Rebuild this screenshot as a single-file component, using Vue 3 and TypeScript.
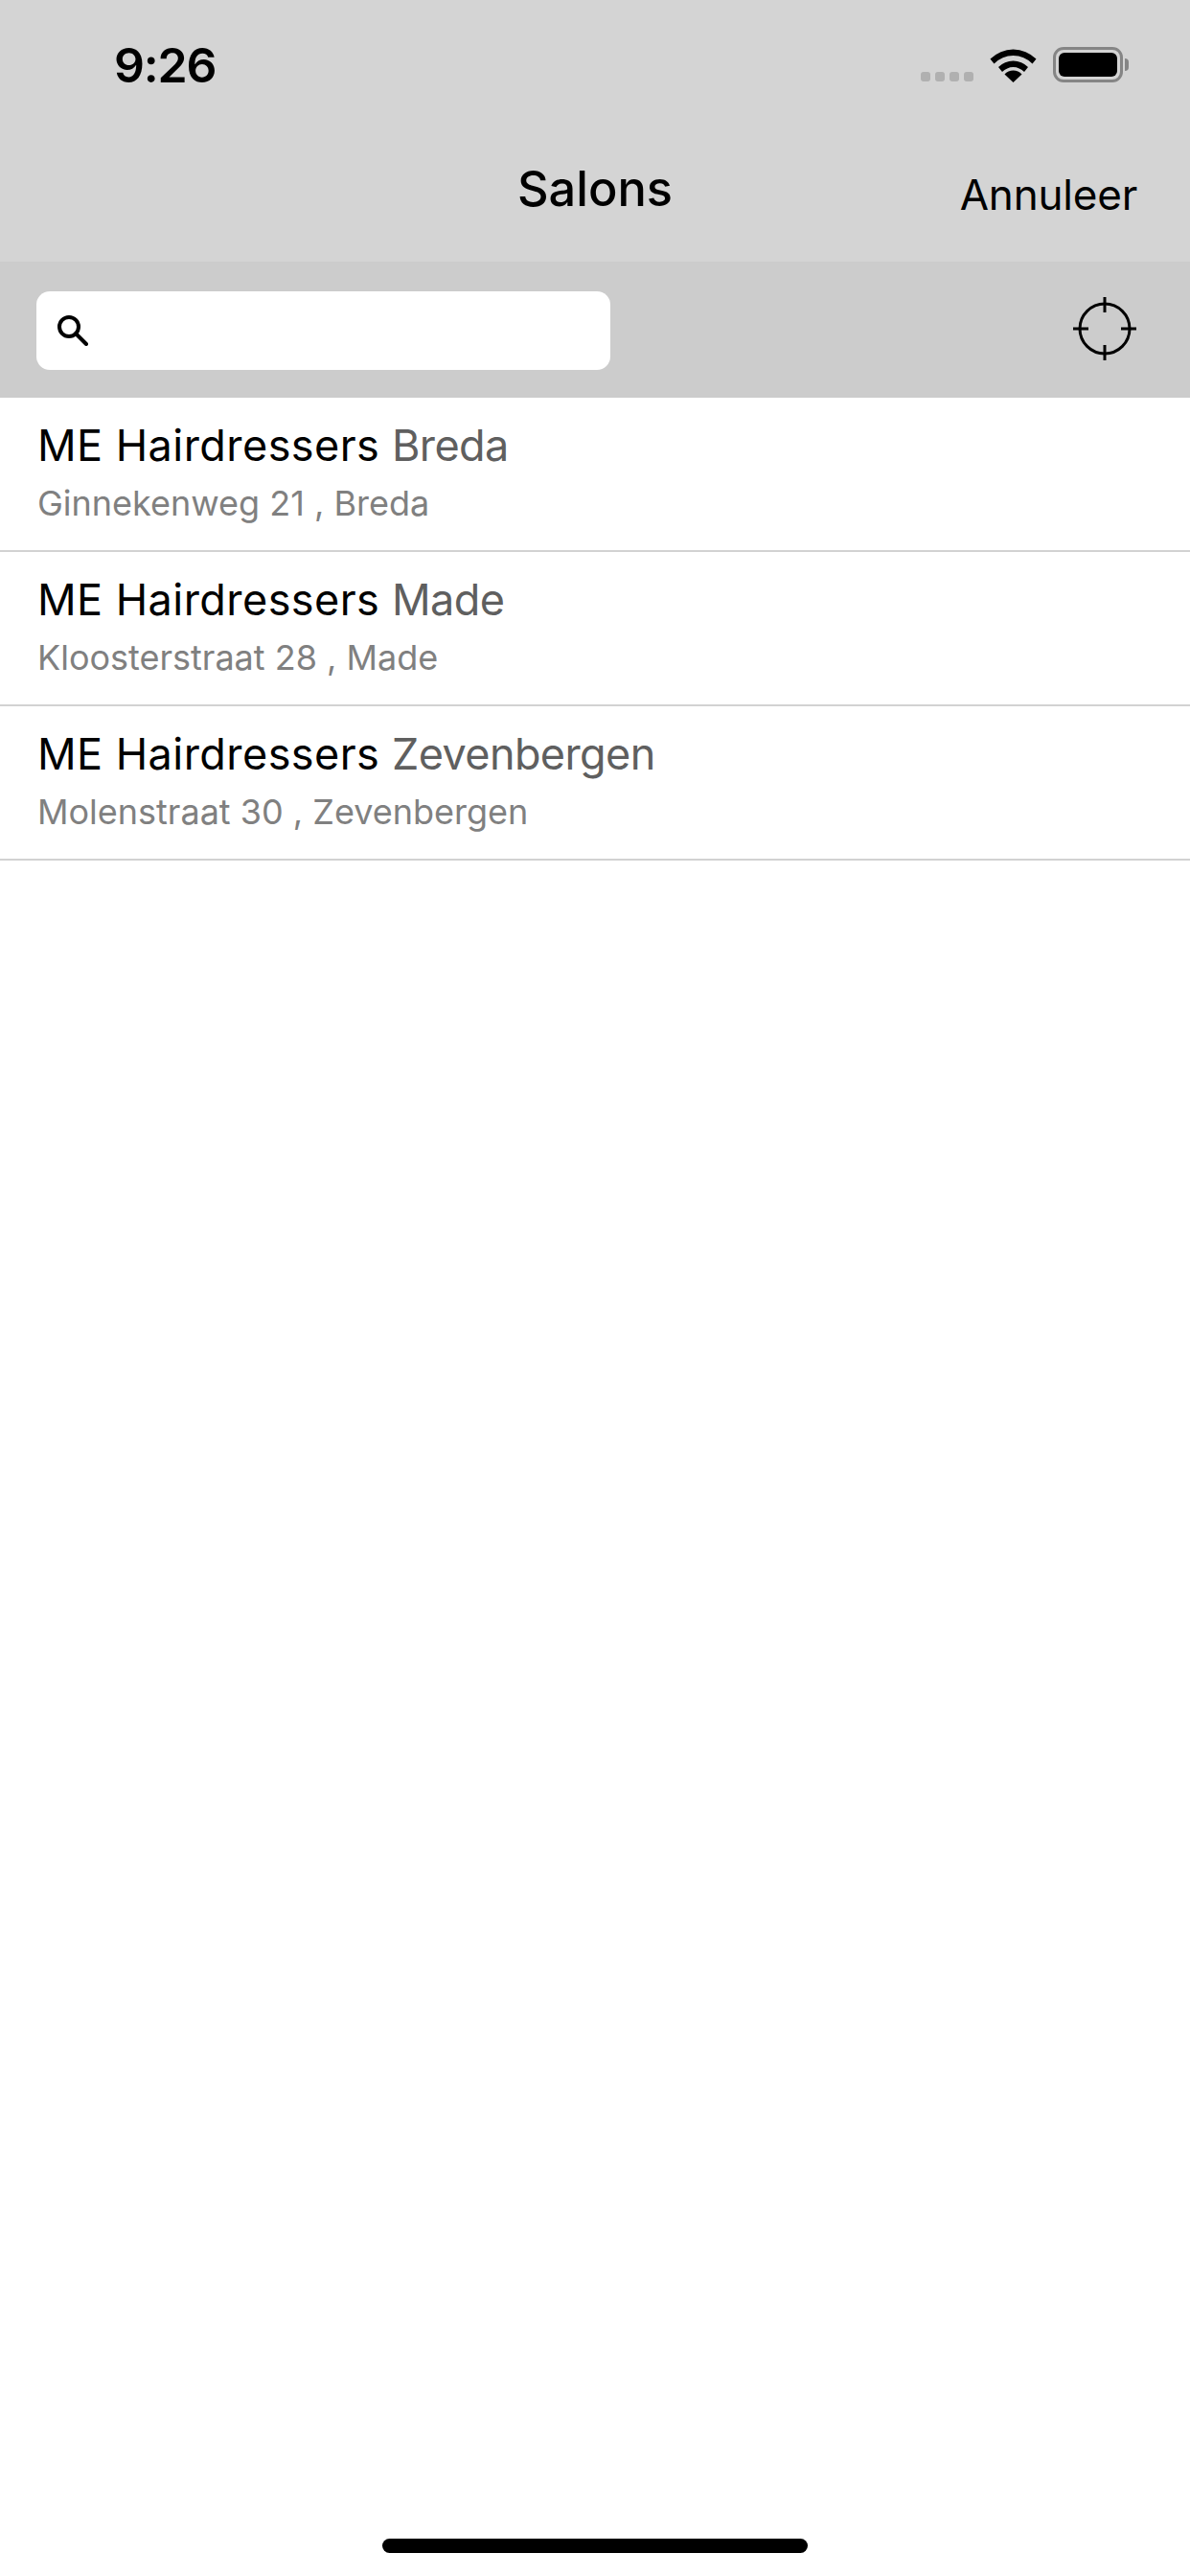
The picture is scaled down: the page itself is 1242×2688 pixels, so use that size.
<script setup lang="ts">
interface Salon { city: string; address: string }
const salons: Salon[] = [
  { city: 'Breda', address: 'Ginnekenweg 21 , Breda' },
  { city: 'Made', address: 'Kloosterstraat 28 , Made' },
  { city: 'Zevenbergen', address: 'Molenstraat 30 , Zevenbergen' },
]
</script>

<template>
  <div class="screen">
    <header class="top">
      <div class="status">
        <span class="time">9:26</span>
        <div class="status-icons">
          <div class="signal"><i></i><i></i><i></i><i></i></div>
          <svg class="wifi" width="49" height="37" viewBox="0 0 49 37">
            <path d="M0.5 12.5 A34 34 0 0 1 48.5 12.5 L44.5 17.5 A28 28 0 0 0 4.5 17.5 Z" fill="#000"/>
            <path d="M9 21 A22 22 0 0 1 40 21 L36 26 A16 16 0 0 0 13 26 Z" fill="#000"/>
            <path d="M15.5 28.5 A12 12 0 0 1 33.5 28.5 L24.5 37 Z" fill="#000"/>
          </svg>
          <div class="battery"><div class="battery-fill"></div></div>
          <div class="battery-cap"></div>
        </div>
      </div>
      <div class="nav">
        <span></span>
        <span class="title">Salons</span>
        <span class="cancel">Annuleer</span>
      </div>
    </header>

    <div class="search-band">
      <div class="search">
        <svg width="32" height="32" viewBox="0 0 32 32">
          <circle cx="12" cy="12" r="10" fill="none" stroke="#000" stroke-width="4"/>
          <path d="M19 19 L30 30" stroke="#000" stroke-width="4" stroke-linecap="round"/>
        </svg>
      </div>
      <svg class="locate" width="68" height="68" viewBox="0 0 68 68">
        <circle cx="34" cy="34" r="26" fill="none" stroke="#000" stroke-width="3"/>
        <path d="M34 1V17M34 51V67M1 34H17M51 34H67" stroke="#000" stroke-width="3"/>
      </svg>
    </div>

    <ul class="list">
      <li v-for="salon in salons" :key="salon.city" class="row">
        <div class="name"><span class="brand">ME Hairdressers</span> <span class="city">{{ salon.city }}</span></div>
        <div class="address">{{ salon.address }}</div>
      </li>
    </ul>

    <div class="home-indicator"></div>
  </div>
</template>

<style>
html, body { margin: 0; background: #fff; }
</style>

<style scoped>
.screen {
  width: 1242px;
  height: 2688px;
  display: flex;
  flex-direction: column;
  background: #fff;
  font-family: Inter, Roboto, "Liberation Sans", sans-serif;
  color: #000;
  overflow: hidden;
}
.top { background: #d4d4d4; height: 273px; flex: none; }
.status {
  height: 132px;
  box-sizing: border-box;
  padding: 0 64px 0 119px;
  display: flex;
  justify-content: space-between;
  align-items: flex-start;
}
.time {
  margin-top: 38px;
  font-size: 50px;
  line-height: 60px;
  font-weight: 600;
  letter-spacing: -1.2px;
}
.status-icons { margin-top: 49px; display: flex; align-items: flex-start; }
.signal { display: flex; gap: 5px; margin-top: 26px; margin-right: 17px; }
.signal i { display: block; width: 10px; height: 10px; border-radius: 3px; background: #b0b0b0; }
.wifi { margin-right: 17px; display: block; }
.battery {
  width: 73px;
  height: 37px;
  box-sizing: border-box;
  border: 3px solid #858585;
  border-radius: 11px;
  padding: 3px;
}
.battery-fill { width: 100%; height: 100%; background: #000; border-radius: 6px; }
.battery-cap {
  width: 4px;
  height: 13px;
  margin: 12px 0 0 2px;
  background: #858585;
  border-radius: 0 4px 4px 0;
}
.nav {
  display: grid;
  grid-template-columns: 1fr auto 1fr;
  padding: 33px 0 0;
  align-items: start;
}
.title { font-size: 50.5px; line-height: 64px; font-weight: 500; }
.cancel { justify-self: end; font-size: 44px; line-height: 56px; letter-spacing: -0.2px; margin: 10px 55px 0 0; }
.search-band {
  flex: none;
  height: 142px;
  box-sizing: border-box;
  background: #ccc;
  padding: 31px 55px 0 38px;
  display: flex;
  justify-content: space-between;
  align-items: flex-start;
}
.search {
  width: 599px;
  height: 82px;
  background: #fff;
  border-radius: 14px;
  box-sizing: border-box;
  padding: 25px 0 0 22px;
}
.search svg, .locate { display: block; }
.locate { margin-top: 5px; }
.list { list-style: none; margin: 0; padding: 0; }
.row {
  height: 161px;
  box-sizing: border-box;
  padding: 21px 39px 0;
  border-bottom: 2px solid #d2d2d2;
}
.name { font-size: 45px; line-height: 58px; white-space: nowrap; }
.brand { letter-spacing: 0.45px; }
.city { color: #5f5f5f; letter-spacing: -0.6px; }
.address { font-size: 36px; line-height: 44px; margin-top: 9px; color: #808080; white-space: nowrap; }
.home-indicator {
  width: 444px;
  height: 15px;
  border-radius: 8px;
  background: #000;
  margin: auto auto 24px;
}
</style>
